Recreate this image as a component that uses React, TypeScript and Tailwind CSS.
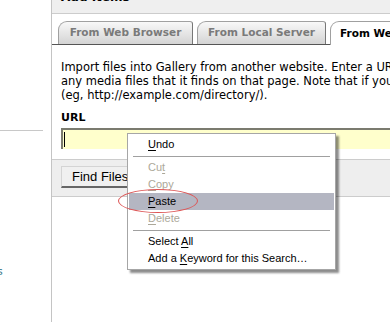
import React from "react";

const verdana = { fontFamily: '"DejaVu Sans", Verdana, sans-serif' };

function MenuItem({
  label,
  mnemonic,
  disabled,
  active,
}: {
  label: string;
  mnemonic: number;
  disabled?: boolean;
  active?: boolean;
}) {
  return (
    <div
      className={`h-[17px] flex items-center pl-[19px] text-[11px] leading-none whitespace-pre ${
        active ? "bg-[#b4b6c2]" : ""
      } ${disabled ? "text-[#aca899]" : "text-black"}`}
    >
      <span>
        {label.slice(0, mnemonic)}
        <span className="underline underline-offset-2">{label[mnemonic]}</span>
        {label.slice(mnemonic + 1)}
      </span>
    </div>
  );
}

function Separator() {
  return (
    <div className="h-[6px] flex items-center px-[4px]">
      <div className="h-px w-full bg-[#a0a0a0]" />
    </div>
  );
}

export default function App() {
  return (
    <div className="relative w-[390px] h-[322px] overflow-hidden bg-white flex">
      {/* SIDEBAR */}
      <div className="w-[52px] shrink-0 border-r border-[#c4c4c4] flex flex-col">
        <div className="h-[131px] w-[43px] border-b border-[#c8c8c8]" />
        <div
          className="mt-[135px] -ml-[3px] text-[11px] leading-none text-[#3c7b8c]"
          style={verdana}
        >
          s
        </div>
      </div>

      {/* MAIN */}
      <div className="flex-1 min-w-0 overflow-hidden flex flex-col" style={verdana}>
        <div className="h-[14px] shrink-0 bg-[#efefef] border-b border-[#cccccc] overflow-hidden pl-[9px]">
          <div className="-mt-[10px] text-[12px] font-bold leading-[14px] text-black">
            Add Items
          </div>
        </div>

        {/* TABS */}
        <div className="mt-[8px] h-[23px] flex items-end pl-[6px] gap-[4px] border-b border-[#555]">
          <div className="w-[135px] h-[23px] shrink-0 rounded-tl-[9px] rounded-tr-[3px] border border-b-0 border-[#a0a0a0] border-r-[#777] bg-gradient-to-b from-[#f8f8f8] to-[#d4d4d4] flex items-center justify-center text-[10.5px] font-bold text-[#7a7a7a]">
            From Web Browser
          </div>
          <div className="w-[129px] h-[23px] shrink-0 rounded-tl-[9px] rounded-tr-[3px] border border-b-0 border-[#a0a0a0] border-r-[#777] bg-gradient-to-b from-[#f8f8f8] to-[#d4d4d4] flex items-center justify-center text-[10.5px] font-bold text-[#7a7a7a]">
            From Local Server
          </div>
          <div className="w-[140px] h-[24px] shrink-0 -mb-px rounded-tl-[9px] border border-b-0 border-[#a0a0a0] bg-white flex items-center pl-[9px] text-[10.5px] font-bold text-black whitespace-nowrap">
            From Web Page
          </div>
        </div>

        {/* DESCRIPTION */}
        <div className="pl-[9px] pt-[15px] text-[11.5px] leading-[14px] text-black whitespace-nowrap">
          <div>
            Import files into Gallery from another website. Enter a URL below to a web page anywhere on the Internet
          </div>
          <div>
            any media files that it finds on that page. Note that if you're entering a URL to a directory
          </div>
          <div>(eg, http://example.com/directory/).</div>
        </div>

        <div className="pl-[9px] mt-[9px] text-[11px] font-bold leading-[14px] text-black">URL</div>

        <div className="ml-[9px] mt-[3px] h-[21px] w-[600px] shrink-0 bg-[#ffffcc] border-t-2 border-l-2 border-[#7b7b6f] flex items-center">
          <div className="ml-px w-px h-[15px] bg-black" />
        </div>

        {/* BUTTON BAND */}
        <div className="mt-[10px] h-[38px] shrink-0 bg-[#eeeeee] border-y border-[#cccccc] pl-[9px] pt-[6px]">
          <div
            className="w-[120px] h-[22px] bg-[#f0f0f0] border border-[#d4d4d4] border-b-2 border-b-[#666] border-r-[#999] pl-[10px] text-[13px] leading-[19px] text-black"
            style={{ fontFamily: '"Liberation Sans", Tahoma, sans-serif' }}
          >
            Find Files
          </div>
        </div>
      </div>

      {/* CONTEXT MENU */}
      <div
        className="absolute left-[127px] top-[133px] w-[209px] bg-white border border-[#a6a6a6] py-[2px] px-px shadow-[3px_3px_2px_rgba(0,0,0,0.45)]"
        style={{ fontFamily: '"Liberation Sans", Tahoma, sans-serif' }}
      >
        <MenuItem label="Undo" mnemonic={0} />
        <Separator />
        <MenuItem label="Cut" mnemonic={2} disabled />
        <MenuItem label="Copy" mnemonic={0} disabled />
        <MenuItem label="Paste" mnemonic={0} active />
        <MenuItem label="Delete" mnemonic={0} disabled />
        <Separator />
        <MenuItem label="Select All" mnemonic={7} />
        <MenuItem label="Add a Keyword for this Search…" mnemonic={6} />
      </div>

      {/* ANNOTATION */}
      <div className="absolute left-[118px] top-[189px] w-[80px] h-[24px] rounded-[50%] border-[1.5px] border-[#dd5555]" />
    </div>
  );
}
